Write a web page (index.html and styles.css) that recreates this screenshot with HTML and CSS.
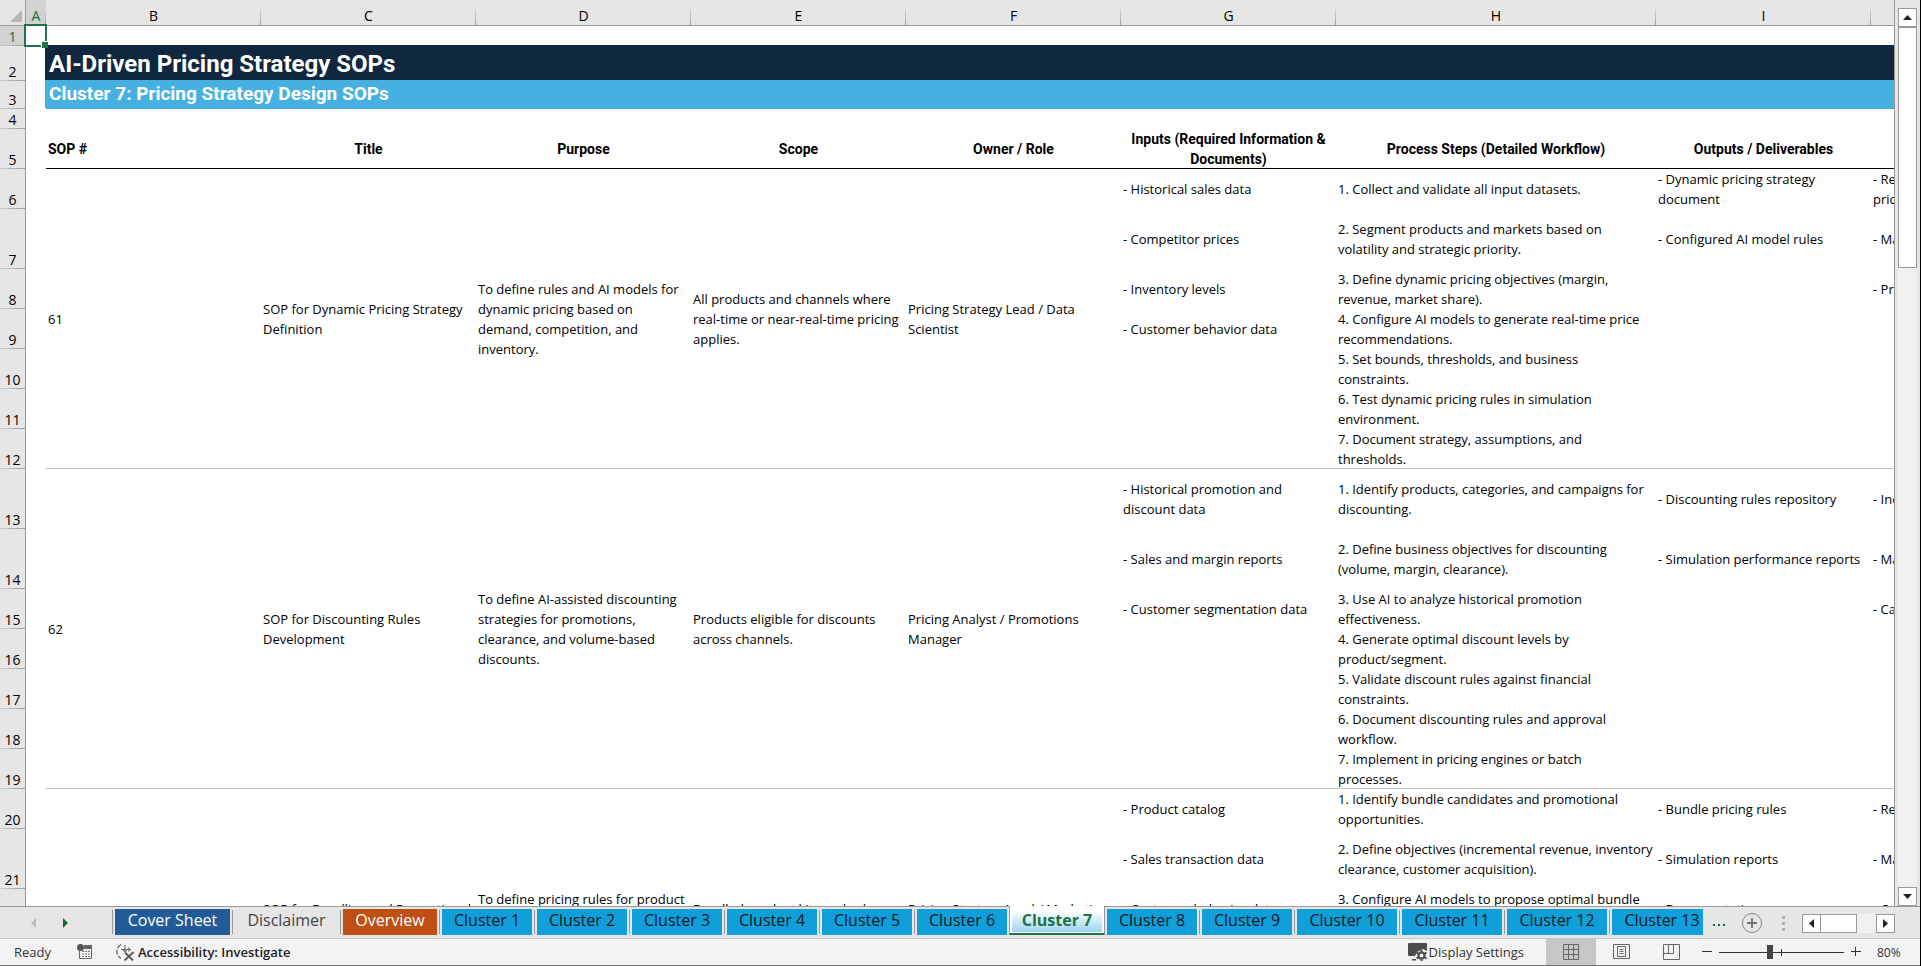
FILE: index.html
```html
<!DOCTYPE html>
<html lang="en">
<head>
  <meta charset="UTF-8">
  <meta name="viewport" content="width=device-width, initial-scale=1.0">
  <title>AI-Driven Pricing Strategy SOPs</title>
  <link rel="stylesheet" href="styles.css">
</head>
<body>
  <main class="workbook">
    <div class="grid">
      <table class="sheet">
        <colgroup>
          <col class="col-head"><col class="col-a">
          <col class="col-std"><col class="col-std"><col class="col-std"><col class="col-std"><col class="col-std"><col class="col-std">
          <col class="col-steps"><col class="col-std"><col class="col-std">
        </colgroup>
        <thead>
          <tr>
            <th class="corner"><svg width="12" height="12" viewBox="0 0 12 12"><path d="M12 0v12H0z" fill="#b7b7b7"/></svg></th>
            <th class="picked">A</th><th>B</th><th>C</th><th>D</th><th>E</th><th>F</th><th>G</th><th>H</th><th>I</th><th></th>
          </tr>
        </thead>
        <tbody>
          <tr class="h20"><th class="picked">1</th><td class="active-cell"><span class="selection"></span></td><td colspan="9"></td></tr>
          <tr class="h35"><th>2</th><td></td><td class="title" colspan="9">AI-Driven Pricing Strategy SOPs</td></tr>
          <tr class="h28"><th>3</th><td></td><td class="subtitle" colspan="9">Cluster 7: Pricing Strategy Design SOPs</td></tr>
          <tr class="h20"><th>4</th><td></td><td colspan="9"></td></tr>
          <tr class="h40 labels">
            <th>5</th><td></td>
            <td class="left">SOP #</td><td>Title</td><td>Purpose</td><td>Scope</td><td>Owner / Role</td>
            <td>Inputs (Required Information &amp;<br>Documents)</td><td>Process Steps (Detailed Workflow)</td><td>Outputs / Deliverables</td><td></td>
          </tr>

          <!-- SOP 61 -->
          <tr class="h40">
            <th>6</th><td></td>
            <td class="end" rowspan="7">61</td>
            <td class="end" rowspan="7">SOP for Dynamic Pricing Strategy<br>Definition</td>
            <td class="end" rowspan="7">To define rules and AI models for<br>dynamic pricing based on<br>demand, competition, and<br>inventory.</td>
            <td class="end" rowspan="7">All products and channels where<br>real-time or near-real-time pricing<br>applies.</td>
            <td class="end" rowspan="7">Pricing Strategy Lead / Data<br>Scientist</td>
            <td>- Historical sales data</td><td>1. Collect and validate all input datasets.</td><td>- Dynamic pricing strategy<br>document</td><td>- Rev<br>price</td>
          </tr>
          <tr class="h60"><th>7</th><td></td><td>- Competitor prices</td><td>2. Segment products and markets based on<br>volatility and strategic priority.</td><td>- Configured AI model rules</td><td>- Mar</td></tr>
          <tr class="h40"><th>8</th><td></td><td>- Inventory levels</td><td>3. Define dynamic pricing objectives (margin,<br>revenue, market share).</td><td></td><td>- Pri</td></tr>
          <tr class="h40"><th>9</th><td></td><td>- Customer behavior data</td><td>4. Configure AI models to generate real-time price<br>recommendations.</td><td></td><td></td></tr>
          <tr class="h40"><th>10</th><td></td><td></td><td>5. Set bounds, thresholds, and business<br>constraints.</td><td></td><td></td></tr>
          <tr class="h40"><th>11</th><td></td><td></td><td>6. Test dynamic pricing rules in simulation<br>environment.</td><td></td><td></td></tr>
          <tr class="h40 last"><th>12</th><td></td><td></td><td>7. Document strategy, assumptions, and<br>thresholds.</td><td></td><td></td></tr>

          <!-- SOP 62 -->
          <tr class="h60">
            <th>13</th><td></td>
            <td class="end" rowspan="7">62</td>
            <td class="end" rowspan="7">SOP for Discounting Rules<br>Development</td>
            <td class="end" rowspan="7">To define AI-assisted discounting<br>strategies for promotions,<br>clearance, and volume-based<br>discounts.</td>
            <td class="end" rowspan="7">Products eligible for discounts<br>across channels.</td>
            <td class="end" rowspan="7">Pricing Analyst / Promotions<br>Manager</td>
            <td>- Historical promotion and<br>discount data</td><td>1. Identify products, categories, and campaigns for<br>discounting.</td><td>- Discounting rules repository</td><td>- Inc</td>
          </tr>
          <tr class="h60"><th>14</th><td></td><td>- Sales and margin reports</td><td>2. Define business objectives for discounting<br>(volume, margin, clearance).</td><td>- Simulation performance reports</td><td>- Mar</td></tr>
          <tr class="h40"><th>15</th><td></td><td>- Customer segmentation data</td><td>3. Use AI to analyze historical promotion<br>effectiveness.</td><td></td><td>- Cam</td></tr>
          <tr class="h40"><th>16</th><td></td><td></td><td>4. Generate optimal discount levels by<br>product/segment.</td><td></td><td></td></tr>
          <tr class="h40"><th>17</th><td></td><td></td><td>5. Validate discount rules against financial<br>constraints.</td><td></td><td></td></tr>
          <tr class="h40"><th>18</th><td></td><td></td><td>6. Document discounting rules and approval<br>workflow.</td><td></td><td></td></tr>
          <tr class="h40 last"><th>19</th><td></td><td></td><td>7. Implement in pricing engines or batch<br>processes.</td><td></td><td></td></tr>

          <!-- SOP 63 -->
          <tr class="h40">
            <th>20</th><td></td>
            <td class="end" rowspan="6"></td>
            <td class="end" rowspan="6">SOP for Bundling and Promotional<br>Pricing</td>
            <td class="end" rowspan="6">To define pricing rules for product<br>bundles and promotional<br>campaigns.</td>
            <td class="end" rowspan="6">Bundled product kits and sales<br>campaigns.</td>
            <td class="end" rowspan="6">Pricing Strategy Lead / Marketing<br>Manager</td>
            <td>- Product catalog</td><td>1. Identify bundle candidates and promotional<br>opportunities.</td><td>- Bundle pricing rules</td><td>- Rev</td>
          </tr>
          <tr class="h60"><th>21</th><td></td><td>- Sales transaction data</td><td>2. Define objectives (incremental revenue, inventory<br>clearance, customer acquisition).</td><td>- Simulation reports</td><td>- Mar</td></tr>
          <tr class="h40"><th></th><td></td><td>- Customer behavior data</td><td>3. Configure AI models to propose optimal bundle<br>pricing.</td><td>- Documentation</td><td>- Cus</td></tr>
          <tr class="h40"><th></th><td></td><td></td><td></td><td></td><td></td></tr>
          <tr class="h40"><th></th><td></td><td></td><td></td><td></td><td></td></tr>
          <tr class="h40 last"><th></th><td></td><td></td><td></td><td></td><td></td></tr>
        </tbody>
      </table>
    </div>
    <div class="vscroll">
      <button class="scroll-btn" aria-label="Scroll up"><svg width="9" height="5" viewBox="0 0 9 5"><path d="M4.500 0L9 5H0z" fill="#222"/></svg></button>
      <div class="vthumb"></div>
      <div class="track"></div>
      <button class="scroll-btn" aria-label="Scroll down"><svg width="9" height="5" viewBox="0 0 9 5"><path d="M0 0h9L4.500 5z" fill="#222"/></svg></button>
    </div>
  </main>

  <nav class="tabbar">
    <div class="tab-nav">
      <button aria-label="Previous sheets"><svg width="5" height="10" viewBox="0 0 5 10"><path d="M5 0v10L0 5z" fill="#bcbcbc"/></svg></button>
      <button aria-label="Next sheets"><svg width="5" height="10" viewBox="0 0 5 10"><path d="M0 0v10L5 5z" fill="#0e6b38"/></svg></button>
    </div>
    <ul class="tabs">
      <li><button class="tab cover">Cover Sheet</button></li>
      <li><button class="tab disclaimer">Disclaimer</button></li>
      <li><button class="tab overview">Overview</button></li>
      <li><button class="tab">Cluster 1</button></li>
      <li><button class="tab">Cluster 2</button></li>
      <li><button class="tab">Cluster 3</button></li>
      <li><button class="tab">Cluster 4</button></li>
      <li><button class="tab">Cluster 5</button></li>
      <li><button class="tab">Cluster 6</button></li>
      <li class="current"><button class="tab">Cluster 7</button></li>
      <li class="after"><button class="tab">Cluster 8</button></li>
      <li><button class="tab">Cluster 9</button></li>
      <li><button class="tab wide">Cluster 10</button></li>
      <li><button class="tab wide">Cluster 11</button></li>
      <li><button class="tab wide">Cluster 12</button></li>
      <li><button class="tab wide">Cluster 13</button></li>
    </ul>
    <div class="tab-tools">
      <button class="more" aria-label="More sheets"><svg width="14" height="4" viewBox="0 0 14 4"><path d="M0 1h2v2H0zM5 1h2v2H5zM10 1h2v2h-2z" fill="#0e6b38"/></svg></button>
      <button class="add" aria-label="New sheet"><svg width="22" height="22" viewBox="0 0 22 22"><circle cx="11" cy="11" r="9.500" fill="none" stroke="#8a8a8a"/><path d="M11 6v10M6 11h10" stroke="#777" stroke-width="2"/></svg></button>
      <svg class="grip" width="3" height="15" viewBox="0 0 3 15"><path d="M0 0h3v3H0zM0 6h3v3H0zM0 12h3v3H0z" fill="#b0b0b0"/></svg>
      <div class="hscroll">
        <button class="scroll-btn" aria-label="Scroll left"><svg width="5" height="9" viewBox="0 0 5 9"><path d="M5 0v9L0 4.500z" fill="#222"/></svg></button>
        <div class="hthumb"></div>
        <div class="track"></div>
        <button class="scroll-btn" aria-label="Scroll right"><svg width="5" height="9" viewBox="0 0 5 9"><path d="M0 0v9l5-4.500z" fill="#222"/></svg></button>
      </div>
    </div>
  </nav>

  <footer class="status">
    <span class="ready">Ready</span>
    <button class="macro" aria-label="Record macro">
      <svg width="16" height="16" viewBox="0 0 16 16"><path d="M2.500 6v8.500h12v-12H7" fill="none" stroke="#666"/><path d="M7 1h8v4H7z" fill="#666"/><circle cx="3.500" cy="3.500" r="3.500" fill="#555"/><path d="M5 7.500h2M8 7.500h2M11 7.500h2M5 10h2M8 10h2M11 10h2M5 12.500h2M8 12.500h2M11 12.500h2" stroke="#777"/></svg>
    </button>
    <button class="access">
      <svg width="20" height="18" viewBox="0 0 20 18" fill="none" stroke="#666"><path d="M6 1.500A8 8 0 0 0 6 15.500" stroke-width="1.300" stroke-dasharray="5 1.500"/><path d="M6 6.500h9M13 4.500l2.500 2-2.500 2M10 2v7M8 7l2 2 2-2" /><path d="M10 9.500l8 8M18.500 9l-9 8.500" stroke="#555" stroke-width="1.800"/></svg>
      Accessibility: Investigate
    </button>
    <div class="status-right">
      <button class="display">
        <svg width="20" height="18" viewBox="0 0 20 18"><path d="M1 0h17a1 1 0 0 1 1 1v7l-4-2-6 3-2 4H1a1 1 0 0 1-1-1V1a1 1 0 0 1 1-1zM4 16h4v1.500H4z" fill="#4d4d4d"/><circle cx="13.500" cy="12.500" r="3" fill="none" stroke="#4d4d4d" stroke-width="2.200"/><path d="M13.500 7v2M13.500 16v2M8.500 9.700l1.800 1M16.700 14.300l1.800 1M8.500 15.300l1.800-1M16.700 10.700l1.800-1" stroke="#4d4d4d" stroke-width="2"/></svg>
        Display Settings
      </button>
      <button class="view on" aria-label="Normal view"><svg width="17" height="17" viewBox="0 0 17 17"><path d="M.5.5h15v15H.5zM5.500.5v15M10.500.5v15M.5 5.500h15M.5 10.500h15" fill="none" stroke="#666"/></svg></button>
      <button class="view" aria-label="Page layout"><svg width="17" height="16" viewBox="0 0 17 16"><path d="M.5.5h16v14H.5zM4.500 2.500h8v10h-8zM6.500 5.500h4M6.500 7.500h4M6.500 9.500h4" fill="none" stroke="#666"/></svg></button>
      <button class="view" aria-label="Page break preview"><svg width="17" height="16" viewBox="0 0 17 16"><path d="M.5.5h16v15H.5zM.5 9.500h10V.5M5.500.5v9" fill="none" stroke="#666"/></svg></button>
      <button class="step" aria-label="Zoom out"><svg width="10" height="10" viewBox="0 0 10 10"><path d="M0 4.500h10" stroke="#333"/></svg></button>
      <input class="zoom" type="range" min="0" max="100" value="40" aria-label="Zoom">
      <button class="step" aria-label="Zoom in"><svg width="10" height="10" viewBox="0 0 10 10"><path d="M0 4.500h10M4.500 0v9" stroke="#333"/></svg></button>
      <span class="percent">80%</span>
    </div>
  </footer>
</body>
</html>
```
FILE: styles.css
```css
* {
  box-sizing: border-box;
}
body {
  margin: 0;
  height: 100vh;
  display: flex;
  flex-direction: column;
  overflow: hidden;
  font-family: "Open Sans", "Noto Sans", sans-serif;
  font-size: 13px;
  color: #000;
  background: #e6e6e6;
  border-right: 1px solid #000;
}
button {
  margin: 0;
  padding: 0;
  border: 0;
  background: none;
  font: inherit;
  color: inherit;
  display: flex;
  align-items: center;
  justify-content: center;
}
svg {
  display: block;
  flex: none;
}

/* grid */
.workbook {
  flex: 1;
  min-height: 0;
  display: flex;
}
.grid {
  flex: 1;
  min-width: 0;
  overflow: hidden;
  background: linear-gradient(#e6e6e6 26px, #fff 26px);
}
.sheet {
  width: 2066px;
  table-layout: fixed;
  border-collapse: separate;
  border-spacing: 0;
  line-height: 20px;
}
.col-head { width: 26px; }
.col-a { width: 20px; }
.col-std { width: 215px; }
.col-steps { width: 320px; }

.sheet th {
  padding: 0;
  font-size: 14px;
  font-weight: 400;
  text-align: center;
}
.sheet thead th {
  height: 26px;
  padding-top: 6px;
  line-height: 19px;
  background: linear-gradient(#e6e6e6, #a0a0a0) right bottom / 1px 20px no-repeat #e6e6e6;
  border-bottom: 1px solid #999;
}
.sheet thead .corner {
  padding: 0 3px 3px 0;
  vertical-align: bottom;
  background: #e6e6e6;
  border-right: 1px solid #999;
}
.corner svg {
  margin-left: auto;
}
.sheet tbody th {
  vertical-align: bottom;
  line-height: 18px;
  background: linear-gradient(90deg, #d0d0d0, #999) left bottom / 100% 1px no-repeat #e6e6e6;
  border-right: 1px solid #999;
}
.sheet th.picked {
  background-color: #d2d2d2;
  color: #1e6b41;
}
.sheet td {
  padding: 0 2px;
  vertical-align: middle;
  white-space: nowrap;
  background: #fff;
}
.h20 { height: 20px; }
.h28 { height: 28px; }
.h35 { height: 35px; }
.h40 { height: 40px; }
.h60 { height: 60px; }

.sheet .title,
.sheet .subtitle,
.labels td {
  font-family: Roboto, "Open Sans", sans-serif;
  font-weight: 700;
}
.sheet .title {
  padding: 0 3px;
  background: #0f2840;
  box-shadow: -1px -1px #0f2840;
  color: #fff;
  font-size: 24px;
  line-height: 34px;
}
.sheet .subtitle {
  padding: 0 3px 2px;
  background: #46b1e1;
  box-shadow: -1px -1px #46b1e1;
  color: #fff;
  font-size: 19px;
  line-height: 26px;
}
.labels td {
  font-size: 14px;
  text-align: center;
}
.labels .left {
  text-align: left;
}
.labels td:nth-child(n+3) {
  box-shadow: inset 0 -1px #000;
}
.sheet .end,
.last td:nth-child(n+3) {
  box-shadow: inset 0 -1px #bfbfbf;
}

.active-cell {
  position: relative;
}
.selection {
  position: absolute;
  z-index: 1;
  inset: -2px -1px -1px -2px;
  border: 2px solid #217346;
}
.selection::after {
  content: "";
  position: absolute;
  right: -3px;
  bottom: -3px;
  width: 6px;
  height: 6px;
  background: #217346;
  border: solid #fff;
  border-width: 1px 0 0 1px;
}

/* scroll bars */
.vscroll {
  width: 26px;
  padding: 8px 3px 0 3px;
  display: flex;
  flex-direction: column;
  border-left: 1px solid #999;
  background: linear-gradient(#e6e6e6, #e6e6e6) left top / 1px 25px no-repeat border-box #e6e6e6;
}
.scroll-btn {
  width: 19px;
  height: 19px;
  flex: none;
  background: #fff;
  border: 1px solid #999;
}
.vthumb {
  height: 241px;
  background: #fff;
  border: 1px solid #999;
}
.track {
  flex: 1;
  background: #f1f1f1;
}

/* sheet tabs */
.tabbar {
  height: 32px;
  flex: none;
  display: flex;
  background: linear-gradient(#999, #999) left top / 100% 1px no-repeat #e6e6e6;
}
.tab-nav {
  width: 112px;
  flex: none;
  display: flex;
  padding: 2px 0 0 17px;
}
.tab-nav button {
  width: 32px;
}
.tabs {
  display: flex;
  min-width: 0;
  margin: 0;
  padding: 0;
  overflow: hidden;
  list-style: none;
}
.tabs li {
  flex: none;
  height: 29px;
  padding: 3px 2px 0 3px;
  background: linear-gradient(#999, #999) left 4px / 1px 24px no-repeat;
}
.tab {
  width: 90px;
  height: 26px;
  padding-bottom: 5px;
  background: #119fd9;
  font-size: 16px;
  color: #0b1a22;
}
.tab.wide { width: 100px; }
.tab.cover {
  width: 115px;
  background: #215c98;
  color: #fff;
}
.tab.disclaimer {
  width: 103px;
  background: none;
  color: #444;
}
.tab.overview {
  width: 94px;
  background: #c04f15;
  color: #fff;
}
.tabs .current {
  padding: 0 2px;
  border: solid #999;
  border-width: 0 1px;
  border-bottom: 2px solid #217346;
  background: #fff;
}
.current .tab {
  padding: 2px 0 0;
  background: linear-gradient(#fff 20%, #9bd4ee);
  color: #217346;
  font-weight: 700;
}
.tabs .after {
  padding-left: 2px;
  background: none;
}
.tab-tools {
  flex: none;
  display: flex;
  align-items: center;
  margin-left: auto;
  padding: 2px 25px 0 10px;
}
.more {
  width: 14px;
  padding-top: 3px;
}
.add {
  width: 22px;
  margin-left: 14px;
}
.grip {
  margin: 0 17px 0 19px;
}
.hscroll {
  display: flex;
  width: 93px;
}
.hthumb {
  width: 37px;
  margin-left: -1px;
  background: #fff;
  border: 1px solid #999;
}

/* status bar */
.status {
  height: 28px;
  flex: none;
  display: flex;
  align-items: center;
  padding-left: 14px;
  background: #f3f3f3;
  border-top: 1px solid #c6c6c6;
  border-bottom: 1px solid #777;
  color: #333;
}
.ready {
  width: 63px;
}
.access {
  margin-left: 22px;
  gap: 3px;
  font-weight: 600;
  color: #222;
}
.status-right {
  display: flex;
  align-items: center;
  align-self: stretch;
  margin-left: auto;
}
.display {
  gap: 1px;
  margin-right: 22px;
}
.view {
  width: 50px;
  align-self: stretch;
}
.view.on {
  background: #c6c6c6;
}
.step {
  width: 22px;
}
.zoom {
  width: 125px;
  height: 16px;
  margin: 0 1px;
  -webkit-appearance: none;
  appearance: none;
  background:
    linear-gradient(#333, #333) center / 100% 1px no-repeat,
    linear-gradient(#333, #333) center / 1px 7px no-repeat;
}
.zoom::-webkit-slider-thumb {
  -webkit-appearance: none;
  width: 6px;
  height: 14px;
  background: #444;
}
.percent {
  width: 53px;
  padding-left: 10px;
  font-size: 12px;
}
```
